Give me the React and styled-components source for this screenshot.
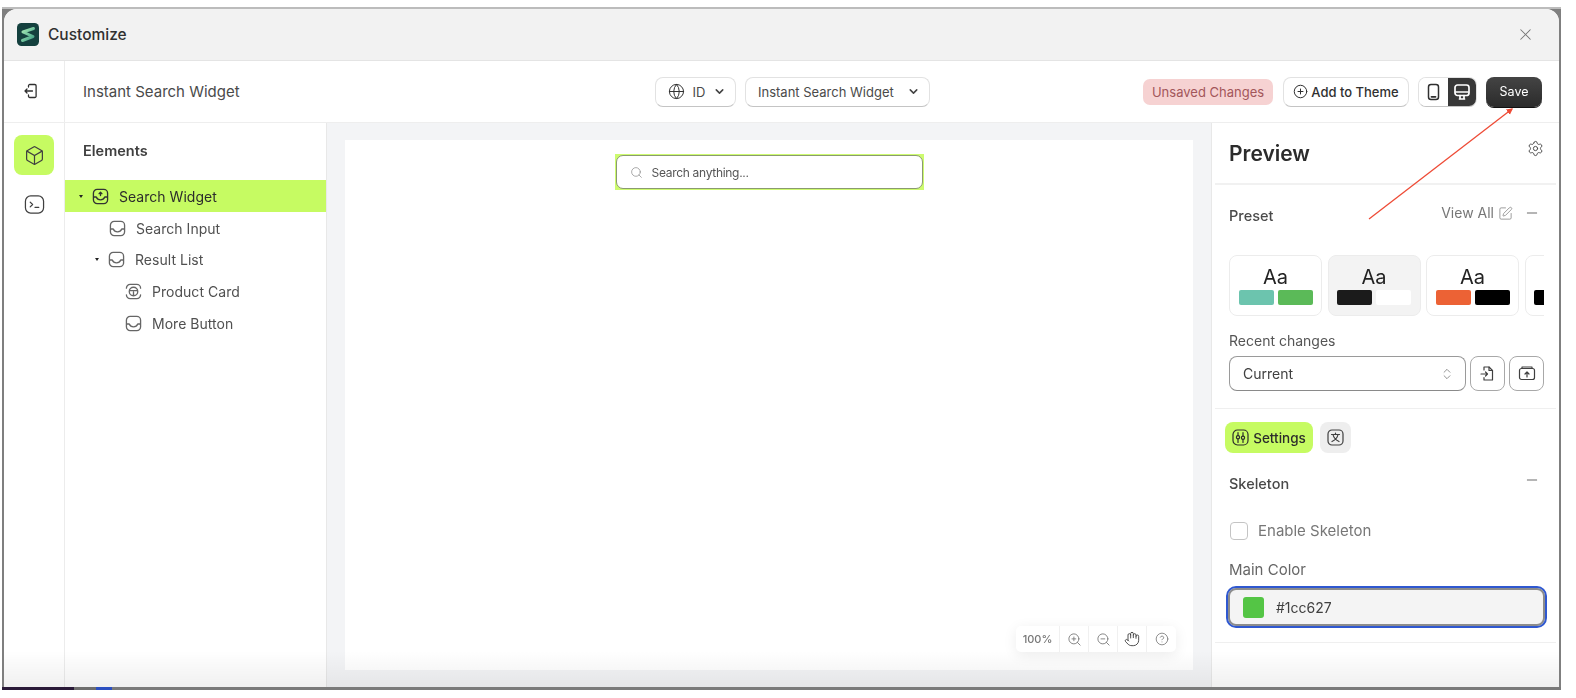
import React from 'react';
import styled, { createGlobalStyle } from 'styled-components';
import {
  Box,
  ChevronDown,
  ChevronsUpDown,
  CirclePlus,
  Globe,
  Minus,
  Search,
  Settings,
  X,
  ZoomIn,
  ZoomOut,
  Hand,
  CircleHelp,
  SquarePen,
} from 'lucide-react';

const GlobalStyle = createGlobalStyle`
  * { box-sizing: border-box; }
  html, body { margin: 0; background: #fff; }
  body { font-family: Inter, "Liberation Sans", sans-serif; color: #303030; }
`;

const Page = styled.div`
  width: 1576px;
  height: 698px;
  padding: 7px 15px 8px 2px;
  overflow: hidden;
`;

const Frame = styled.div`
  height: 100%;
  padding: 2px 2px 0;
  display: flex;
  flex-direction: column;
  background: linear-gradient(#bcbcbc 0 2px, #7f7f7f 2px);
`;

const BottomEdge = styled.div`
  height: 3px;
  flex: none;
  margin: 0 -2px;
  background: linear-gradient(
    90deg,
    #2a1a38 0 72px,
    #6d6d6d 72px 94px,
    #2b4fc0 94px 110px,
    #7a7a7a 110px
  );
`;

const Window = styled.div`
  position: relative;
  flex: 1;
  min-height: 0;
  background: #fff;
  border-radius: 13px 13px 0 0;
  display: flex;
  flex-direction: column;
  overflow: hidden;
  filter: blur(0.3px);
`;

const TitleBar = styled.header`
  height: 52px;
  flex: none;
  background: #f2f2f2;
  border-bottom: 1px solid #e4e4e4;
  display: flex;
  align-items: center;
  padding: 0 24px 0 13px;
  gap: 9px;
`;

const Title = styled.span`
  font-size: 15.5px;
  font-weight: 500;
  color: #303030;
  flex: 1;
`;

const Toolbar = styled.div`
  height: 62px;
  flex: none;
  display: flex;
  align-items: center;
  border-bottom: 1px solid #eeeeee;
`;

const ExitCell = styled.div`
  width: 61px;
  height: 100%;
  flex: none;
  border-right: 1px solid #ececec;
  display: flex;
  align-items: center;
  justify-content: center;
  padding: 0 6px 2px 0;
`;

const PageName = styled.div`
  width: 590px;
  flex: none;
  padding-left: 18px;
  font-size: 15px;
  color: #4a4a4a;
`;

const Selects = styled.div`
  display: flex;
  gap: 9px;
  width: 488px;
  flex: none;
`;

const Pill = styled.div`
  height: 30px;
  border: 1px solid #e2e2e2;
  border-bottom-color: #c4c4c4;
  border-radius: 8px;
  background: #fff;
  display: flex;
  align-items: center;
  justify-content: space-between;
  font-size: 13px;
  color: #4a4a4a;
  padding: 0 9px 0 12px;
  width: ${(p) => p.$width};
  gap: 4px;
  white-space: nowrap;
`;

const Actions = styled.div`
  display: flex;
  align-items: center;
  flex: none;
`;

const Unsaved = styled.div`
  width: 130px;
  height: 26px;
  border-radius: 7px;
  background: #f6d2d2;
  color: #a3565a;
  font-size: 13px;
  display: flex;
  align-items: center;
  justify-content: center;
  margin-right: 10px;
  white-space: nowrap;
`;

const ThemeButton = styled(Pill)`
  width: 126px;
  padding: 0;
  justify-content: center;
  color: #303030;
  font-weight: 500;
  margin-right: 9px;
  gap: 3px;
`;

const DeviceToggle = styled.div`
  width: 59px;
  height: 30px;
  border: 1px solid #e2e2e2;
  border-bottom-color: #c4c4c4;
  border-radius: 8px;
  overflow: hidden;
  display: flex;
  margin-right: 9px;
`;

const DeviceCell = styled.div`
  flex: 1;
  display: flex;
  align-items: center;
  justify-content: center;
  background: ${(p) => (p.$active ? '#383838' : '#fff')};
  color: ${(p) => (p.$active ? '#fff' : '#303030')};
`;

const SaveButton = styled.div`
  width: 56px;
  height: 30px;
  border-radius: 8px;
  background: linear-gradient(#444, #2b2b2b);
  box-shadow: 0 1px 0 #111;
  color: #fff;
  font-size: 12.5px;
  display: flex;
  align-items: center;
  justify-content: center;
`;

const Body = styled.div`
  flex: 1;
  min-height: 0;
  display: flex;
`;

const Rail = styled.nav`
  width: 61px;
  flex: none;
  border-right: 1px solid #ececec;
  display: flex;
  flex-direction: column;
  align-items: center;
  padding-top: 12px;
  gap: 9px;
`;

const RailButton = styled.div`
  width: 40px;
  height: 40px;
  border-radius: 8px;
  background: ${(p) => (p.$active ? '#c6fb62' : 'transparent')};
  display: flex;
  align-items: center;
  justify-content: center;
  color: #404040;
`;

const Elements = styled.aside`
  width: 262px;
  flex: none;
  border-right: 1px solid #e8e8e8;
`;

const ElementsTitle = styled.div`
  height: 57px;
  padding: 19px 0 0 18px;
  font-size: 14.5px;
  font-weight: 600;
  color: #404040;
  line-height: 18px;
`;

const TreeRow = styled.div`
  height: 32px;
  display: flex;
  align-items: center;
  padding: 2px 0 0 ${(p) => p.$indent}px;
  background: ${(p) => (p.$active ? '#c6fb62' : 'transparent')};
  font-size: 14px;
  letter-spacing: 0.03px;
  color: ${(p) => (p.$active ? '#2c2c2c' : '#505050')};
  &:not(:first-child) { height: 31.6px; }
`;

const Caret = styled.span`
  width: 0;
  height: 0;
  margin-right: 9px;
  border-left: 2.5px solid transparent;
  border-right: 2.5px solid transparent;
  border-top: 3px solid #222;
`;

const TreeIcon = styled.svg`
  width: 17px;
  height: 17px;
  margin-right: 10px;
  flex: none;
  fill: none;
  stroke: ${(p) => p.$color || '#666'};
  stroke-width: 1.4;
  stroke-linecap: round;
  stroke-linejoin: round;
`;

const Canvas = styled.main`
  flex: 1;
  min-width: 0;
  background: #f3f4f6;
  padding: 17px 18px 17px 18px;
  display: flex;
`;

const Sheet = styled.div`
  position: relative;
  flex: 1;
  background: #fff;
  display: flex;
  justify-content: center;
  align-items: flex-start;
  padding-top: 14px;
`;

const SearchOutline = styled.div`
  width: 309px;
  height: 36px;
  padding: 1px;
  background: #cdfb6f;
`;

const SearchBox = styled.div`
  height: 100%;
  background: #fff;
  border: 1.5px solid #8a9a70;
  border-radius: 7px;
  display: flex;
  align-items: center;
  padding-left: 13px;
  gap: 9px;
  font-size: 12px;
  letter-spacing: -0.3px;
  color: #555;
`;

const ZoomBar = styled.div`
  position: absolute;
  right: 17px;
  bottom: 18px;
  height: 26px;
  display: flex;
  background: #fff;
  border-radius: 5px;
  box-shadow: 0 3px 14px rgba(0, 0, 0, 0.08);
`;

const ZoomCell = styled.div`
  width: ${(p) => p.$width || 29}px;
  display: flex;
  align-items: center;
  justify-content: center;
  border-right: ${(p) => (p.$last ? 'none' : '1px solid #f0f0f0')};
  font-size: 11px;
  font-weight: 500;
  color: #777;
`;

const Panel = styled.aside`
  width: 348px;
  flex: none;
  border-left: 1px solid #e8e8e8;
`;

const PanelHead = styled.div`
  height: 62px;
  margin: 0 3px;
  border-bottom: 2px solid #f1f1f1;
  display: flex;
  justify-content: space-between;
  padding: 17px 12px 0 14px;
`;

const PanelTitle = styled.h2`
  margin: 0;
  font-size: 21px;
  font-weight: 600;
  color: #2c2c2c;
  line-height: 28px;
`;

const Section = styled.section`
  padding: ${(p) => p.$top}px 19px 0 17px;
`;

const SectionHead = styled.div`
  display: flex;
  justify-content: space-between;
  align-items: flex-start;
  font-size: 14.5px;
  font-weight: 500;
  color: #4a4a4a;
  line-height: 24px;
  height: 24px;
`;

const ViewAll = styled.div`
  display: flex;
  align-items: center;
  font-size: 14px;
  font-weight: 400;
  color: #777;
  gap: 4px;
  margin-top: -3px;
`;

const CollapseIcon = styled(Minus)`
  margin-left: ${(p) => p.$gap || 0}px;
`;

const Presets = styled.div`
  display: flex;
  gap: 5.5px;
  margin-top: 27px;
  width: 315px;
  overflow: hidden;
`;

const PresetCard = styled.div`
  width: 93px;
  height: 61px;
  flex: none;
  border: 1px solid #ececec;
  border-radius: 8px;
  background: ${(p) => (p.$active ? '#f3f3f3' : '#fff')};
  display: flex;
  flex-direction: column;
  align-items: center;
  padding-top: 10px;
`;

const Aa = styled.div`
  font-size: 20px;
  line-height: 22px;
  min-height: 22px;
  color: #222;
`;

const Swatches = styled.div`
  display: flex;
  gap: 4px;
  margin-top: 2px;
`;

const Swatch = styled.span`
  width: 35px;
  height: 15px;
  border-radius: 2px;
  background: ${(p) => p.$color};
`;

const RecentLabel = styled.div`
  font-size: 14px;
  line-height: 18px;
  color: #555;
  margin-top: 16px;
`;

const ColorLabel = styled.div`
  font-size: 15px;
  line-height: 18px;
  color: #666;
  margin-top: 21px;
`;

const RecentRow = styled.div`
  display: flex;
  gap: 4px;
  margin-top: 6px;
  width: 316px;
`;

const RecentSelect = styled.div`
  width: 237px;
  height: 35px;
  border: 1px solid #9a9a9a;
  border-bottom-color: #8a8a8a;
  border-radius: 8px;
  display: flex;
  align-items: center;
  justify-content: space-between;
  padding: 0 11px 0 13px;
  font-size: 14px;
  color: #404040;
`;

const SquareButton = styled.div`
  width: 35px;
  height: 35px;
  border: 1.5px solid #a8a8a8;
  border-radius: 8px;
  display: flex;
  align-items: center;
  justify-content: center;
`;

const Divider = styled.div`
  height: 1px;
  margin: ${(p) => p.$top}px 3px 0;
  background: #efefef;
`;

const Tabs = styled.div`
  display: flex;
  gap: 7px;
  padding: 13px 0 0 13px;
`;

const SettingsTab = styled.div`
  width: 88px;
  height: 31px;
  border-radius: 8px;
  background: #c6fb62;
  display: flex;
  align-items: center;
  justify-content: center;
  gap: 4px;
  font-size: 13.5px;
  font-weight: 500;
  color: #2c2c2c;
`;

const IconTab = styled.div`
  width: 31px;
  height: 31px;
  border-radius: 8px;
  background: #eeeeee;
  display: flex;
  align-items: center;
  justify-content: center;
`;

const CheckRow = styled.div`
  display: flex;
  align-items: center;
  gap: 10px;
  margin: 25px 0 0 1px;
  font-size: 15px;
  color: #777;
`;

const CheckBox = styled.span`
  width: 18px;
  height: 18px;
  border: 1px solid #c4c4c4;
  border-radius: 4px;
`;

const ColorField = styled.div`
  width: 317px;
  height: 38px;
  margin: 9px 0 0 -1px;
  border: 2px solid #8c8c8c;
  outline: 2px solid #2f58d0;
  border-radius: 8px;
  background: #f4f4f4;
  display: flex;
  align-items: center;
  padding-left: 13px;
  gap: 12px;
  font-size: 14px;
  color: #404040;
`;

const ColorChip = styled.span`
  width: 21px;
  height: 21px;
  border-radius: 3px;
  background: #54c545;
`;

const Arrow = styled.svg`
  position: absolute;
  left: 0;
  top: 0;
  width: 100%;
  height: 100%;
  pointer-events: none;
`;

const Fade = styled.div`
  position: absolute;
  left: 0;
  right: 0;
  bottom: 0;
  height: 36px;
  pointer-events: none;
  background: linear-gradient(rgba(0, 0, 0, 0), rgba(0, 0, 0, 0.06));
`;

const Logo = () => (
  <svg width="22" height="23" viewBox="0 0 22 23">
    <defs>
      <linearGradient id="logoStroke" x1="0" y1="0" x2="1" y2="1">
        <stop offset="0" stopColor="#a6e8b4" />
        <stop offset="1" stopColor="#3f9f86" />
      </linearGradient>
    </defs>
    <rect width="22" height="23" rx="4.500" fill="#14403e" />
    <path
      d="M16.500 5.500 L6 9 L16 13.500 L5.500 17.500"
      fill="none"
      stroke="url(#logoStroke)"
      strokeWidth="3"
      strokeLinecap="round"
      strokeLinejoin="round"
    />
  </svg>
);

const ExitIcon = () => (
  <svg width="16" height="16" viewBox="0 0 16 16" fill="none" stroke="#303030" strokeWidth="1.3" strokeLinecap="round" strokeLinejoin="round">
    <path d="M5.500 4V2.800A1.300 1.300 0 0 1 6.800 1.500h5a1.300 1.300 0 0 1 1.300 1.300v10.400a1.300 1.300 0 0 1-1.300 1.300h-5a1.300 1.300 0 0 1-1.300-1.300V12" />
    <path d="M9.500 8H2M4 6 2 8l2 2" />
  </svg>
);

const TerminalIcon = () => (
  <svg width="21" height="21" viewBox="0 0 22 22" fill="none" stroke="#404040" strokeWidth="1.3" strokeLinecap="round" strokeLinejoin="round">
    <rect x="1.500" y="2" width="19" height="18" rx="5.500" />
    <path d="M6.500 8.500 9 11l-2.500 2.500M11.500 14h4" />
  </svg>
);

const PhoneIcon = () => (
  <svg width="15" height="18" viewBox="0 0 15 18" fill="none" stroke="#303030" strokeWidth="1.5" strokeLinecap="round">
    <rect x="2.500" y="1.500" width="10" height="15" rx="2.500" />
    <path d="M5.500 13.800h4" strokeWidth="1.800" />
  </svg>
);

const DesktopIcon = () => (
  <svg width="18" height="18" viewBox="0 0 18 18" fill="none" stroke="#fff" strokeWidth="1.700" strokeLinecap="round" strokeLinejoin="round">
    <rect x="2" y="2" width="14" height="10.500" rx="2.500" />
    <path d="M2.500 9h13M6.500 16h5M7 12.500v3.500M11 12.500v3.500" />
  </svg>
);

// tray shape shared by most tree rows
const TrayIcon = ({ color, badge }) => (
  <TreeIcon viewBox="0 0 18 18" $color={color}>
    <rect x="1.500" y="1.500" width="15" height="15" rx="4" />
    <path d="M1.800 9.500h2.700c.8 2 2.600 3 4.500 3s3.700-1 4.500-3h2.700" />
    {badge && <path d="M9 4.500v3.500M7.500 6 9 4.500 10.500 6" />}
  </TreeIcon>
);

const CardIcon = () => (
  <TreeIcon viewBox="0 0 18 18">
    <path d="M1.500 5.500a4 4 0 0 1 4-4h7a4 4 0 0 1 4 4M1.500 12.500a4 4 0 0 0 4 4h7a4 4 0 0 0 4-4" />
    <circle cx="9" cy="9" r="4.500" />
    <path d="M5 8h8M9 9.500v3.500" />
  </TreeIcon>
);

const ImportIcon = () => (
  <svg width="17" height="17" viewBox="0 0 17 17" fill="none" stroke="#404040" strokeWidth="1.2" strokeLinecap="round" strokeLinejoin="round">
    <path d="M5 5V2h5l3.500 3.500V15H5v-2.500" />
    <path d="M10 2v3.500h3.500M2 9h6.500M6.500 7l2 2-2 2" />
  </svg>
);

const ExportIcon = () => (
  <svg width="18" height="17" viewBox="0 0 18 17" fill="none" stroke="#404040" strokeWidth="1.2" strokeLinecap="round" strokeLinejoin="round">
    <rect x="1.500" y="3.500" width="15" height="11" rx="2" />
    <path d="M4 3.500V2h10v1.500M9 12V7M7 9l2-2 2 2" />
  </svg>
);

const SlidersIcon = () => (
  <svg width="17" height="17" viewBox="0 0 17 17" fill="none" stroke="#2c2c2c" strokeWidth="1.2" strokeLinecap="round">
    <rect x="1" y="1" width="15" height="15" rx="4.500" />
    <path d="M6 3.500v3M6 10v3.500M11 3.500V7M11 10.500v3" />
    <circle cx="6" cy="8.200" r="1.600" />
    <circle cx="11" cy="8.800" r="1.600" />
  </svg>
);

const TranslateIcon = () => (
  <svg width="17" height="17" viewBox="0 0 17 17" fill="none" stroke="#404040" strokeWidth="1.2" strokeLinecap="round">
    <rect x="1" y="1" width="15" height="15" rx="4" />
    <path d="M4.500 5.500h8M8.500 4v1.500M11 5.500c-.5 3-3 5.500-6 7M6 5.500c.6 3 3 5.500 6 7" />
  </svg>
);

const presets = [
  { id: 'teal', label: 'Aa', colors: ['#6cc4ae', '#5bba58'] },
  { id: 'dark', label: 'Aa', colors: ['#1b1b1b', '#ffffff'], active: true },
  { id: 'orange', label: 'Aa', colors: ['#ec6235', '#000000'] },
  { id: 'black', label: '', colors: ['#000000', '#000000'] },
];

export default function App() {
  return (
    <Page>
      <GlobalStyle />
      <Frame>
        <Window>
          <TitleBar>
            <Logo />
            <Title>Customize</Title>
            <X size={19} strokeWidth={1.3} color="#777" />
          </TitleBar>

          <Toolbar>
            <ExitCell>
              <ExitIcon />
            </ExitCell>
            <PageName>Instant Search Widget</PageName>
            <Selects>
              <Pill $width="81px">
                <Globe size={17} strokeWidth={1.4} color="#303030" />
                <span>ID</span>
                <ChevronDown size={13} strokeWidth={2.8} color="#444" />
              </Pill>
              <Pill $width="185px">
                <span>Instant Search Widget</span>
                <ChevronDown size={13} strokeWidth={2.8} color="#444" />
              </Pill>
            </Selects>
            <Actions>
              <Unsaved>Unsaved Changes</Unsaved>
              <ThemeButton>
                <CirclePlus size={15} strokeWidth={1.6} color="#303030" />
                Add to Theme
              </ThemeButton>
              <DeviceToggle>
                <DeviceCell>
                  <PhoneIcon />
                </DeviceCell>
                <DeviceCell $active>
                  <DesktopIcon />
                </DeviceCell>
              </DeviceToggle>
              <SaveButton>Save</SaveButton>
            </Actions>
          </Toolbar>

          <Body>
            <Rail>
              <RailButton $active>
                <Box size={21} strokeWidth={1.4} />
              </RailButton>
              <RailButton>
                <TerminalIcon />
              </RailButton>
            </Rail>

            <Elements>
              <ElementsTitle>Elements</ElementsTitle>
              <TreeRow $active $indent={14}>
                <Caret />
                <TrayIcon color="#333" badge />
                Search Widget
              </TreeRow>
              <TreeRow $indent={44}>
                <TrayIcon />
                Search Input
              </TreeRow>
              <TreeRow $indent={30}>
                <Caret />
                <TrayIcon />
                Result List
              </TreeRow>
              <TreeRow $indent={60}>
                <CardIcon />
                Product Card
              </TreeRow>
              <TreeRow $indent={60}>
                <TrayIcon />
                More Button
              </TreeRow>
            </Elements>

            <Canvas>
              <Sheet>
                <SearchOutline>
                  <SearchBox>
                    <Search size={13} strokeWidth={1.3} color="#888" />
                    Search anything...
                  </SearchBox>
                </SearchOutline>
                <ZoomBar>
                  <ZoomCell $width={44}>100%</ZoomCell>
                  <ZoomCell>
                    <ZoomIn size={15} strokeWidth={1.4} />
                  </ZoomCell>
                  <ZoomCell>
                    <ZoomOut size={15} strokeWidth={1.4} />
                  </ZoomCell>
                  <ZoomCell>
                    <Hand size={16} strokeWidth={1.4} color="#444" />
                  </ZoomCell>
                  <ZoomCell $last>
                    <CircleHelp size={14} strokeWidth={1.4} />
                  </ZoomCell>
                </ZoomBar>
              </Sheet>
            </Canvas>

            <Panel>
              <PanelHead>
                <PanelTitle>Preview</PanelTitle>
                <Settings size={17} strokeWidth={1.3} color="#444" />
              </PanelHead>

              <Section $top={19}>
                <SectionHead>
                  Preset
                  <ViewAll>
                    View All
                    <SquarePen size={15} strokeWidth={1.3} color="#888" />
                    <CollapseIcon size={16} strokeWidth={1.3} color="#555" $gap={7} />
                  </ViewAll>
                </SectionHead>
                <Presets>
                  {presets.map((preset) => (
                    <PresetCard key={preset.id} $active={preset.active}>
                      <Aa>{preset.label}</Aa>
                      <Swatches>
                        {preset.colors.map((color, i) => (
                          <Swatch key={i} $color={color} />
                        ))}
                      </Swatches>
                    </PresetCard>
                  ))}
                </Presets>
                <RecentLabel>Recent changes</RecentLabel>
                <RecentRow>
                  <RecentSelect>
                    Current
                    <ChevronsUpDown size={14} strokeWidth={1.2} color="#666" />
                  </RecentSelect>
                  <SquareButton>
                    <ImportIcon />
                  </SquareButton>
                  <SquareButton>
                    <ExportIcon />
                  </SquareButton>
                </RecentRow>
              </Section>

              <Divider $top={17} />
              <Tabs>
                <SettingsTab>
                  <SlidersIcon />
                  Settings
                </SettingsTab>
                <IconTab>
                  <TranslateIcon />
                </IconTab>
              </Tabs>

              <Section $top={19}>
                <SectionHead>
                  Skeleton
                  <CollapseIcon size={16} strokeWidth={1.3} color="#555" />
                </SectionHead>
                <CheckRow>
                  <CheckBox />
                  Enable Skeleton
                </CheckRow>
                <ColorLabel>Main Color</ColorLabel>
                <ColorField>
                  <ColorChip />
                  #1cc627
                </ColorField>
              </Section>
              <Divider $top={16} />
            </Panel>
          </Body>

          <Fade />
          <Arrow>
            <defs>
              <marker id="arrowHead" markerWidth="6" markerHeight="6" refX="4" refY="2.500" orient="auto">
                <path d="M0 0 L5 2.500 L0 5 Z" fill="#ee4b36" />
              </marker>
            </defs>
            <line x1="1365" y1="210" x2="1508" y2="100" stroke="#ee4b36" strokeWidth="1.3" markerEnd="url(#arrowHead)" />
          </Arrow>
        </Window>
        <BottomEdge />
      </Frame>
    </Page>
  );
}
